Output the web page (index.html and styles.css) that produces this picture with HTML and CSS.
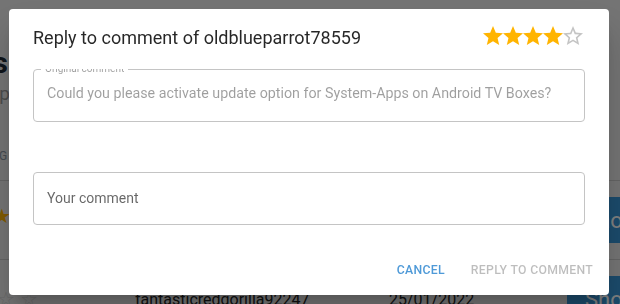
FILE: index.html
```html
<!DOCTYPE html>
<html lang="en">
<head>
    <meta charset="UTF-8">
    <meta name="viewport" content="width=device-width, initial-scale=1.0">
    <title>Reply to comment</title>
    <link rel="stylesheet" href="styles.css">
</head>
<body>

    <!-- Page behind the dialog -->
    <div class="page">
        <div class="page-header">
            <h1 class="page-title">Comments</h1>
            <p class="page-sub">Keep</p>
            <p class="page-label">G</p>
        </div>

        <div class="row">
            <span class="row-stars gold">&#9733;</span>
            <span class="row-user"></span>
            <span class="row-date"></span>
            <button class="row-btn">Show</button>
        </div>
        <div class="row">
            <span class="row-stars">&#9734; &#9734;</span>
            <span class="row-user">fantasticredgorilla92247</span>
            <span class="row-date">25/01/2022</span>
            <button class="row-btn">Show</button>
        </div>
    </div>

    <!-- Dialog -->
    <div class="backdrop">
        <div class="dialog">
            <div class="dialog-title">
                <h2>Reply to comment of oldblueparrot78559</h2>
                <div class="rating">
                    <svg class="star full" viewBox="0 0 24 24"><path d="M12 17.27 18.18 21l-1.64-7.03L22 9.24l-7.19-.61L12 2 9.19 8.63 2 9.24l5.46 4.73L5.82 21z"/></svg>
                    <svg class="star full" viewBox="0 0 24 24"><path d="M12 17.27 18.18 21l-1.64-7.03L22 9.24l-7.19-.61L12 2 9.19 8.63 2 9.24l5.46 4.73L5.82 21z"/></svg>
                    <svg class="star full" viewBox="0 0 24 24"><path d="M12 17.27 18.18 21l-1.64-7.03L22 9.24l-7.19-.61L12 2 9.19 8.63 2 9.24l5.46 4.73L5.82 21z"/></svg>
                    <svg class="star full" viewBox="0 0 24 24"><path d="M12 17.27 18.18 21l-1.64-7.03L22 9.24l-7.19-.61L12 2 9.19 8.63 2 9.24l5.46 4.73L5.82 21z"/></svg>
                    <svg class="star empty" viewBox="0 0 24 24"><path d="m22 9.24-7.19-.62L12 2 9.19 8.63 2 9.24l5.46 4.73L5.82 21 12 17.27 18.18 21l-1.63-7.03L22 9.24zM12 15.4l-3.76 2.27 1-4.28-3.32-2.88 4.38-.38L12 6.1l1.71 4.04 4.38.38-3.32 2.88 1 4.28L12 15.4z"/></svg>
                </div>
            </div>

            <div class="dialog-content">
                <fieldset class="field disabled">
                    <legend>Original comment</legend>
                    <div class="field-text">Could you please activate update option for System-Apps on Android TV Boxes?</div>
                </fieldset>

                <div class="field reply">
                    <div class="field-text">Your comment</div>
                </div>
            </div>

            <div class="dialog-actions">
                <button class="btn primary">Cancel</button>
                <button class="btn" disabled>Reply to comment</button>
            </div>
        </div>
    </div>

</body>
</html>
```

FILE: styles.css
```css
/* General */
body {
    margin: 0;
    font-family: Roboto, "Liberation Sans", Arial, sans-serif;
    background-color: #e8e8e8;
    color: rgba(0, 0, 0, 0.87);
    overflow: hidden;
    height: 304px;
}

/* Page behind the dialog */
.page-header {
    height: 180px;
    padding-top: 45px;
    box-sizing: border-box;
}

.page-title {
    width: 200px;
    margin: 0 0 0 -192px;
    text-align: right;
    font-size: 30px;
    line-height: 36px;
    font-weight: 700;
    color: #1c2733;
}

.page-sub {
    width: 100px;
    margin: 1px 0 0 -90px;
    text-align: right;
    font-size: 19px;
    line-height: 24px;
    color: #9a9a9a;
}

.page-label {
    width: 100px;
    margin: 42px 0 0 -1px;
    font-size: 12px;
    line-height: 16px;
    color: #8a96a3;
}

.row {
    display: grid;
    grid-template-columns: 135px 254px 178px 53px;
    align-items: center;
    height: 79px;
    border-top: 1px solid #c8c8c8;
    box-sizing: border-box;
}

.row-stars {
    font-size: 20px;
    color: #ccc;
    margin-left: -3px;
}

.row-stars.gold {
    color: #ffb400;
    margin-left: -7px;
    margin-top: -8px;
}

.row-user,
.row-date {
    font-size: 16px;
    color: #222;
}

.row-btn {
    height: 46px;
    border: none;
    background-color: #3795d7;
    color: #fff;
    font-family: inherit;
    font-size: 22px;
    text-align: left;
    padding-left: 18px;
    width: 100px;
}

/* Dialog */
.backdrop {
    position: fixed;
    inset: 0;
    background-color: rgba(0, 0, 0, 0.5);
}

.dialog {
    position: absolute;
    left: 9px;
    top: 9px;
    width: 600px;
    height: 286px;
    background-color: #fff;
    border-radius: 4px;
    box-shadow: 0 11px 15px -7px rgba(0,0,0,0.2), 0 24px 38px 3px rgba(0,0,0,0.14);
    display: flex;
    flex-direction: column;
}

.dialog-title {
    display: flex;
    justify-content: space-between;
    align-items: center;
    padding: 13px 24px 0;
    height: 32px;
}

.dialog-title h2 {
    margin: 0;
    font-size: 18px;
    font-weight: 400;
    line-height: 32px;
    color: rgba(0, 0, 0, 0.85);
}

.rating {
    display: flex;
    margin-right: 0;
    margin-top: -4px;
}

.star {
    width: 24px;
    height: 24px;
    margin-left: -4px;
}

.star.full {
    fill: #ffb400;
}

.star.empty {
    fill: #c4c4c4;
}

.dialog-content {
    flex: 1;
    padding: 0 24px;
    overflow: hidden;
    margin-top: 15px;
}

.field {
    box-sizing: border-box;
    height: 53px;
    margin: 0;
    border: 1px solid #c4c4c4;
    border-radius: 4px;
    padding: 0 13px;
    display: flex;
    align-items: center;
}

fieldset.field {
    display: block;
    margin-top: -7px;
    height: 60px;
}

.field legend {
    font-size: 10px;
    color: rgba(0, 0, 0, 0.38);
    padding: 0 4px;
    margin-left: -6px;
    line-height: 14px;
}

fieldset .field-text {
    margin-top: 6px;
}

.field-text {
    font-size: 14px;
    line-height: 23px;
    color: rgba(0, 0, 0, 0.6);
}

.disabled .field-text {
    font-size: 14.25px;
    color: rgba(0, 0, 0, 0.38);
}

.reply {
    margin-top: 50px;
}

/* Actions */
.dialog-actions {
    display: flex;
    justify-content: flex-end;
    align-items: center;
    padding: 9px 8px 7px;
    gap: 10px;
}

.btn {
    border: none;
    background: none;
    height: 36px;
    padding: 6px 8px;
    min-width: 64px;
    font-family: inherit;
    font-size: 12.25px;
    font-weight: 500;
    letter-spacing: 0.3px;
    text-transform: uppercase;
    color: rgba(0, 0, 0, 0.26);
}

.btn.primary {
    color: #4f9ad8;
}
```
